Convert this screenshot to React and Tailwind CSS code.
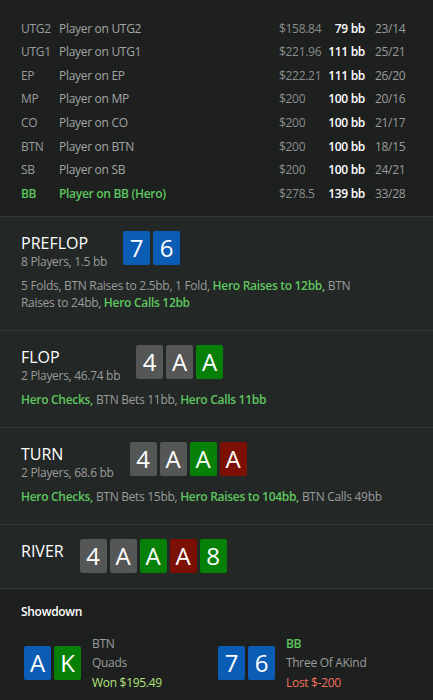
const players = [
  { pos: "UTG2", name: "Player on UTG2", money: "$158.84", bb: "79 bb", ratio: "23/14" },
  { pos: "UTG1", name: "Player on UTG1", money: "$221.96", bb: "111 bb", ratio: "25/21" },
  { pos: "EP", name: "Player on EP", money: "$222.21", bb: "111 bb", ratio: "26/20" },
  { pos: "MP", name: "Player on MP", money: "$200", bb: "100 bb", ratio: "20/16" },
  { pos: "CO", name: "Player on CO", money: "$200", bb: "100 bb", ratio: "21/17" },
  { pos: "BTN", name: "Player on BTN", money: "$200", bb: "100 bb", ratio: "18/15" },
  { pos: "SB", name: "Player on SB", money: "$200", bb: "100 bb", ratio: "24/21" },
  { pos: "BB", name: "Player on BB (Hero)", money: "$278.5", bb: "139 bb", ratio: "33/28", hero: true },
];

const cardColors = {
  blue: "bg-[#0b5cb5]",
  gray: "bg-[#555756]",
  green: "bg-[#068006]",
  red: "bg-[#7d1004]",
};

function Card({ rank, color }) {
  return (
    <div
      className={`flex h-[34px] w-[27px] items-center justify-center rounded-[2px] text-[24px] leading-none tracking-normal text-white ${cardColors[color]}`}
    >
      {rank}
    </div>
  );
}

function Cards({ cards }) {
  return (
    <div className="flex gap-[3px]">
      {cards.map((c, i) => (
        <Card key={i} rank={c[0]} color={c[1]} />
      ))}
    </div>
  );
}

function Street({ title, sub, cards, actions, narrow, last }) {
  return (
    <div className={`border-b border-[#343937] px-[21px] pt-[14px] ${last ? "pb-[15px]" : "pb-[19px]"}`}>
      <div className="flex items-start gap-[16px]">
        <div>
          <div className="pt-[2px] text-[16px] leading-[20px] tracking-normal text-white">{title}</div>
          {sub && <div className="text-[12px] leading-[18px] text-[#9a9c9b]">{sub}</div>}
        </div>
        <Cards cards={cards} />
      </div>
      {actions && (
        <p className={`mt-[6px] text-[12px] leading-[17px] text-[#9a9c9b] ${narrow ? "max-w-[340px]" : "max-w-[380px]"}`}>
          {actions.map((a, i) => (
            <span key={i} className={a.hero ? "font-semibold text-[#5ec65e]" : ""}>
              {a.text}
              {i < actions.length - 1 ? " " : ""}
            </span>
          ))}
        </p>
      )}
    </div>
  );
}

export default function App() {
  return (
    <div className="min-h-[700px] bg-[#1d201f] font-[family-name:'Open_Sans',sans-serif] text-[12px] tracking-[-0.3px]">
      <div className="border-b border-[#343937] px-[21px] pt-[17px] pb-[10px]">
        {players.map((p) => (
          <div key={p.pos} className="flex h-[23.57px] items-center whitespace-nowrap">
            <span className={`w-[38px] ${p.hero ? "font-semibold text-[#5ec65e]" : "text-[#9a9c9b]"}`}>{p.pos}</span>
            <span className={`flex-1 ${p.hero ? "font-semibold text-[#5ec65e]" : "text-[#a3a5a4]"}`}>{p.name}</span>
            <span className="w-[48px] text-[#8b8d8c]">{p.money}</span>
            <span className="w-[38px] text-right font-semibold text-white">{p.bb}</span>
            <span className="w-[47px] pl-[10px] text-[#9a9c9b]">{p.ratio}</span>
          </div>
        ))}
      </div>

      <div className="bg-[#232726]">
        <Street
          title="PREFLOP"
          sub="8 Players, 1.5 bb"
          cards={[["7", "blue"], ["6", "blue"]]}
          narrow
          actions={[
            { text: "5 Folds, BTN Raises to 2.5bb, 1 Fold," },
            { text: "Hero Raises to 12bb,", hero: true },
            { text: "BTN Raises to 24bb," },
            { text: "Hero Calls 12bb", hero: true },
          ]}
        />
        <Street
          title="FLOP"
          sub="2 Players, 46.74 bb"
          cards={[["4", "gray"], ["A", "gray"], ["A", "green"]]}
          actions={[
            { text: "Hero Checks,", hero: true },
            { text: "BTN Bets 11bb," },
            { text: "Hero Calls 11bb", hero: true },
          ]}
        />
        <Street
          title="TURN"
          sub="2 Players, 68.6 bb"
          cards={[["4", "gray"], ["A", "gray"], ["A", "green"], ["A", "red"]]}
          actions={[
            { text: "Hero Checks,", hero: true },
            { text: "BTN Bets 15bb," },
            { text: "Hero Raises to 104bb,", hero: true },
            { text: "BTN Calls 49bb" },
          ]}
        />
        <Street
          title="RIVER"
          cards={[["4", "gray"], ["A", "gray"], ["A", "green"], ["A", "red"], ["8", "green"]]}
          last
        />
      </div>

      <div className="px-[21px] pt-[15px]">
        <div className="text-[12px] font-semibold leading-[16px] text-white">Showdown</div>
        <div className="mt-[14px] grid grid-cols-2 pl-[3px]">
          <div className="flex items-center gap-[11px]">
            <Cards cards={[["A", "blue"], ["K", "green"]]} />
            <div className="leading-[19.5px]">
              <div className="text-[#9a9c9b]">BTN</div>
              <div className="text-[#9a9c9b]">Quads</div>
              <div className="text-[#b4e27a]">Won $195.49</div>
            </div>
          </div>
          <div className="flex items-center gap-[11px]">
            <Cards cards={[["7", "blue"], ["6", "blue"]]} />
            <div className="leading-[19.5px]">
              <div className="font-semibold text-[#5ec65e]">BB</div>
              <div className="text-[#9a9c9b]">Three Of AKind</div>
              <div className="text-[#f0705e]">Lost $-200</div>
            </div>
          </div>
        </div>
      </div>
    </div>
  );
}
